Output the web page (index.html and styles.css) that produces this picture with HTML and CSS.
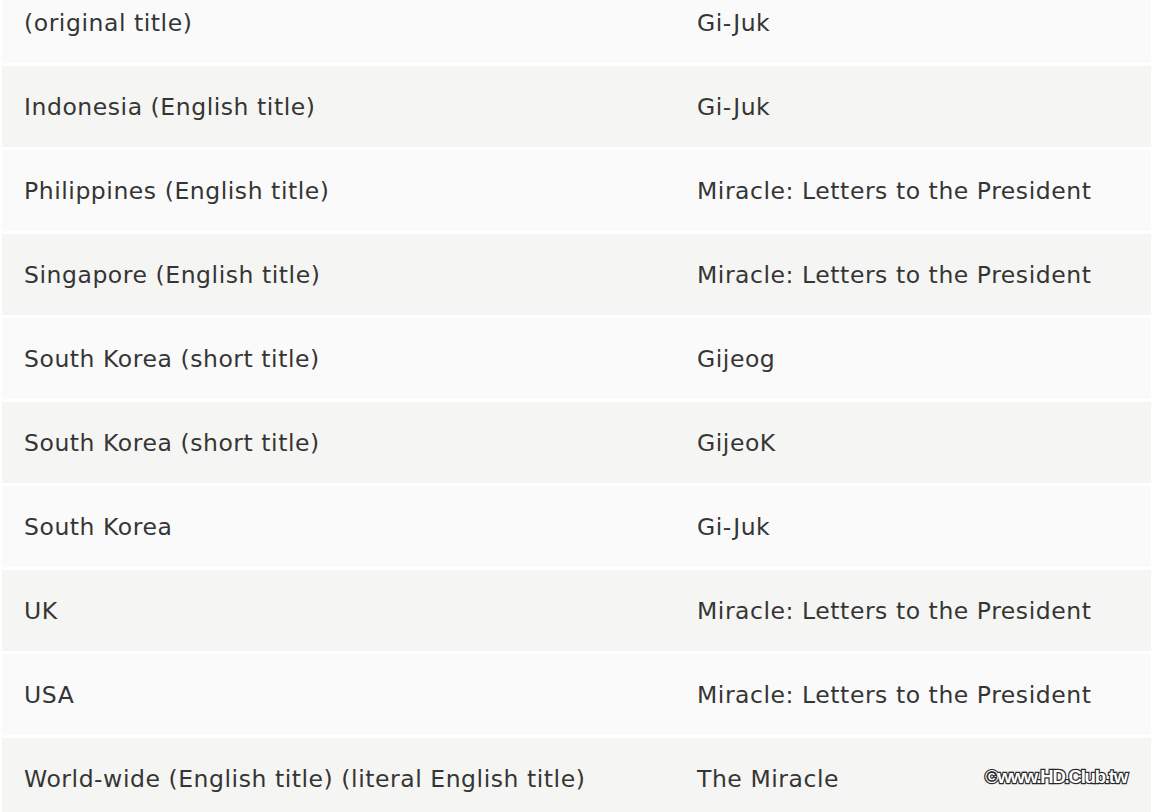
FILE: index.html
```html
<!DOCTYPE html>
<html>
<head>
<meta charset="utf-8">
<link rel="stylesheet" href="styles.css">
</head>
<body>
<div class="page">
<table class="aka">
  <tbody>
    <tr><td class="c1">(original title)</td><td class="c2">Gi-Juk</td></tr>
    <tr><td class="c1">Indonesia (English title)</td><td class="c2">Gi-Juk</td></tr>
    <tr><td class="c1">Philippines (English title)</td><td class="c2">Miracle: Letters to the President</td></tr>
    <tr><td class="c1">Singapore (English title)</td><td class="c2">Miracle: Letters to the President</td></tr>
    <tr><td class="c1">South Korea (short title)</td><td class="c2">Gijeog</td></tr>
    <tr><td class="c1">South Korea (short title)</td><td class="c2">GijeoK</td></tr>
    <tr><td class="c1">South Korea</td><td class="c2">Gi-Juk</td></tr>
    <tr><td class="c1">UK</td><td class="c2">Miracle: Letters to the President</td></tr>
    <tr><td class="c1">USA</td><td class="c2">Miracle: Letters to the President</td></tr>
    <tr><td class="c1">World-wide (English title) (literal English title)</td><td class="c2">The Miracle</td></tr>
  </tbody>
</table>
<div class="watermark">©www.HD.Club.tw</div>
</div>
</body>
</html>
```

FILE: styles.css
```css
html, body {
  margin: 0;
  padding: 0;
  background: #ffffff;
  overflow: hidden;
}
.page {
  position: relative;
  width: 1151px;
  height: 812px;
  overflow: hidden;
}
.aka {
  margin-top: -21px;
  margin-left: 2px;
  border-collapse: separate;
  border-spacing: 0 3px;
  width: 1175px;
  table-layout: fixed;
  font-family: "DejaVu Sans", Verdana, sans-serif;
  font-size: 23.5px;
  letter-spacing: 0.55px;
  color: #353535;
}
.aka td {
  height: 81px;
  padding: 0 0 0 22px;
  vertical-align: middle;
  box-sizing: border-box;
  white-space: nowrap;
}
.aka .c1 { width: 673px; }
.aka tr:nth-child(odd) td { background: #fafafa; }
.aka tr:nth-child(even) td { background: #f5f5f3; }
.watermark {
  position: absolute;
  left: 985px;
  top: 766px;
  font-family: "Liberation Sans Narrow", "Liberation Sans", Arial, sans-serif;
  font-weight: bold;
  font-size: 18.5px;
  letter-spacing: -1.2px;
  color: #ffffff;
  -webkit-text-stroke: 2.4px #2a2a2a;
  paint-order: stroke fill;
}
```
